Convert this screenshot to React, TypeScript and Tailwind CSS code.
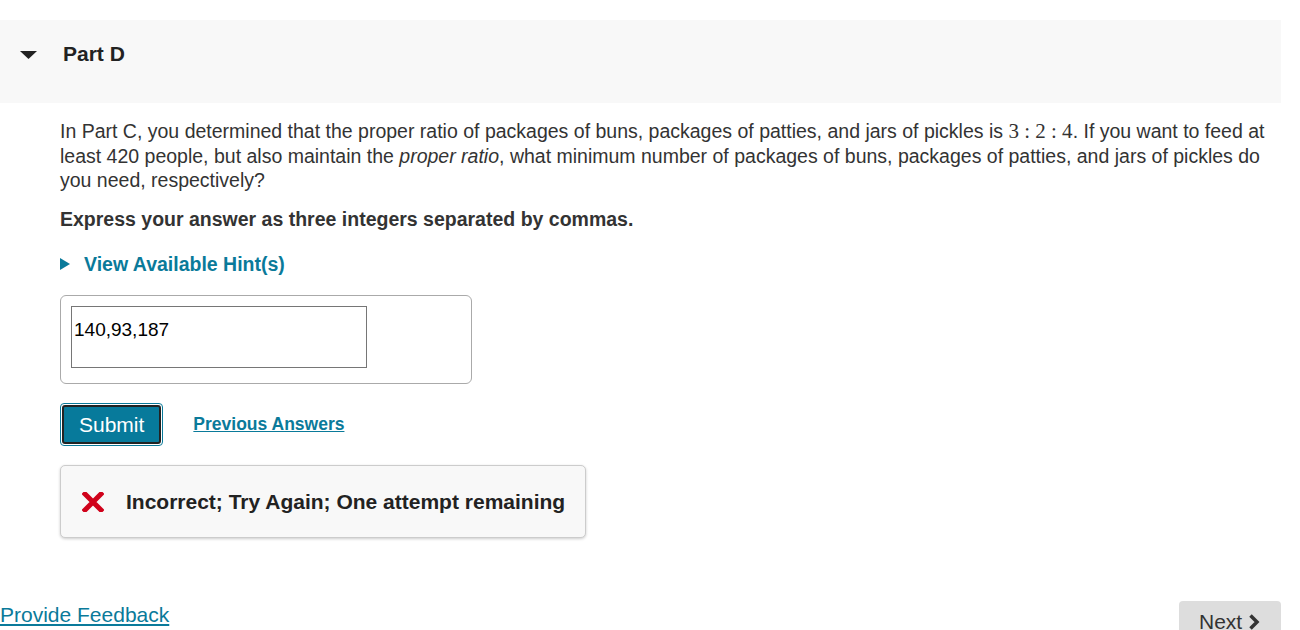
import React from "react";

function TriangleDown() {
  return (
    <svg width="17" height="8" viewBox="0 0 17 8" className="block">
      <path d="M0 0 H17 L8.5 8 Z" fill="#222" />
    </svg>
  );
}

function TriangleRight() {
  return (
    <svg width="10" height="12" viewBox="0 0 10 12" className="block">
      <path d="M0 0 L10 6 L0 12 Z" fill="#0a7a9a" />
    </svg>
  );
}

function RedX() {
  return (
    <svg width="22" height="20" viewBox="0 0 22 20" className="block">
      <path d="M3 2 L19 18 M19 2 L3 18" stroke="#d0021b" strokeWidth="5" strokeLinecap="square" />
    </svg>
  );
}

export default function App() {
  return (
    <div className="w-[1300px] h-[630px] overflow-hidden bg-white font-['Liberation_Sans',Arial,sans-serif] text-[#333]">
      {/* part header */}
      <div className="mt-[20px] w-[1281px] h-[83px] bg-[#f8f8f8] flex items-start pt-[22px]">
        <div className="w-[63px] pl-[20px] pt-[9px]">
          <TriangleDown />
        </div>
        <h2 className="text-[21px] leading-[24px] font-bold text-[#222]">Part D</h2>
      </div>

      <div className="w-[1281px] pl-[60px]">
        <p className="mt-[16px] text-[19.5px] leading-[24.5px] text-[#333]">
          In Part C, you determined that the proper ratio of packages of buns, packages of patties, and jars of pickles is{" "}
          <span className="font-['Liberation_Serif',serif] text-[21px]">3 : 2 : 4</span>. If you want to feed at least 420
          people, but also maintain the <em>proper ratio</em>, what minimum number of packages of buns, packages of
          patties, and jars of pickles do you need, respectively?
        </p>

        <p className="mt-[14px] text-[19.5px] leading-[24px] font-bold text-[#333]">
          Express your answer as three integers separated by commas.
        </p>

        <div className="mt-[21px] flex items-center h-[24px]">
          <TriangleRight />
          <span className="ml-[14px] text-[19.5px] leading-[24px] font-bold text-[#0a7a9a]">
            View Available Hint(s)
          </span>
        </div>

        {/* answer box */}
        <div className="mt-[19px] w-[412px] h-[89px] border border-[#aaa] rounded-[6px] pl-[10px] pt-[10px]">
          <div className="w-[296px] h-[62px] border border-[#767676] bg-white px-[2px] pt-[12px] text-[19px] leading-[22px] text-black">
            140,93,187
          </div>
        </div>

        {/* submit row */}
        <div className="mt-[19px] flex items-center">
          <div className="border border-[#0a7a9a] rounded-[4px] p-px bg-white">
            <div className="border-2 border-[#222] rounded-[3px] bg-[#077a9b] px-[15px] py-[5px] text-white text-[21px] leading-[25px]">
              Submit
            </div>
          </div>
          <a className="ml-[30px] text-[17.5px] leading-[22px] font-bold text-[#0a7a9a] underline">Previous Answers</a>
        </div>

        {/* feedback */}
        <div className="mt-[19px] w-[526px] h-[73px] bg-[#f8f8f8] border border-[#ccc] rounded-[5px] shadow-[0_1px_3px_rgba(0,0,0,0.2)] flex items-center pl-[21px] pt-[2px]">
          <RedX />
          <span className="ml-[22px] text-[21px] leading-[24px] font-bold text-[#222]">
            Incorrect; Try Again; One attempt remaining
          </span>
        </div>
      </div>

      {/* footer */}
      <div className="mt-[63px] w-[1281px] flex justify-between items-start">
        <a className="mt-[2px] text-[21px] leading-[24px] text-[#0a7a9a] underline">Provide Feedback</a>
        <div className="w-[102px] h-[40px] bg-[#ddd] rounded-t-[4px] pt-[9px] pl-[20px] flex items-start text-[21px] leading-[24px] text-[#333]">
          Next
          <svg width="12" height="16" viewBox="0 0 12 16" className="ml-[6px] mt-[4px]">
            <path d="M2.5 1.5 L9 8 L2.5 14.5" stroke="#333" strokeWidth="3.5" fill="none" />
          </svg>
        </div>
      </div>
    </div>
  );
}
